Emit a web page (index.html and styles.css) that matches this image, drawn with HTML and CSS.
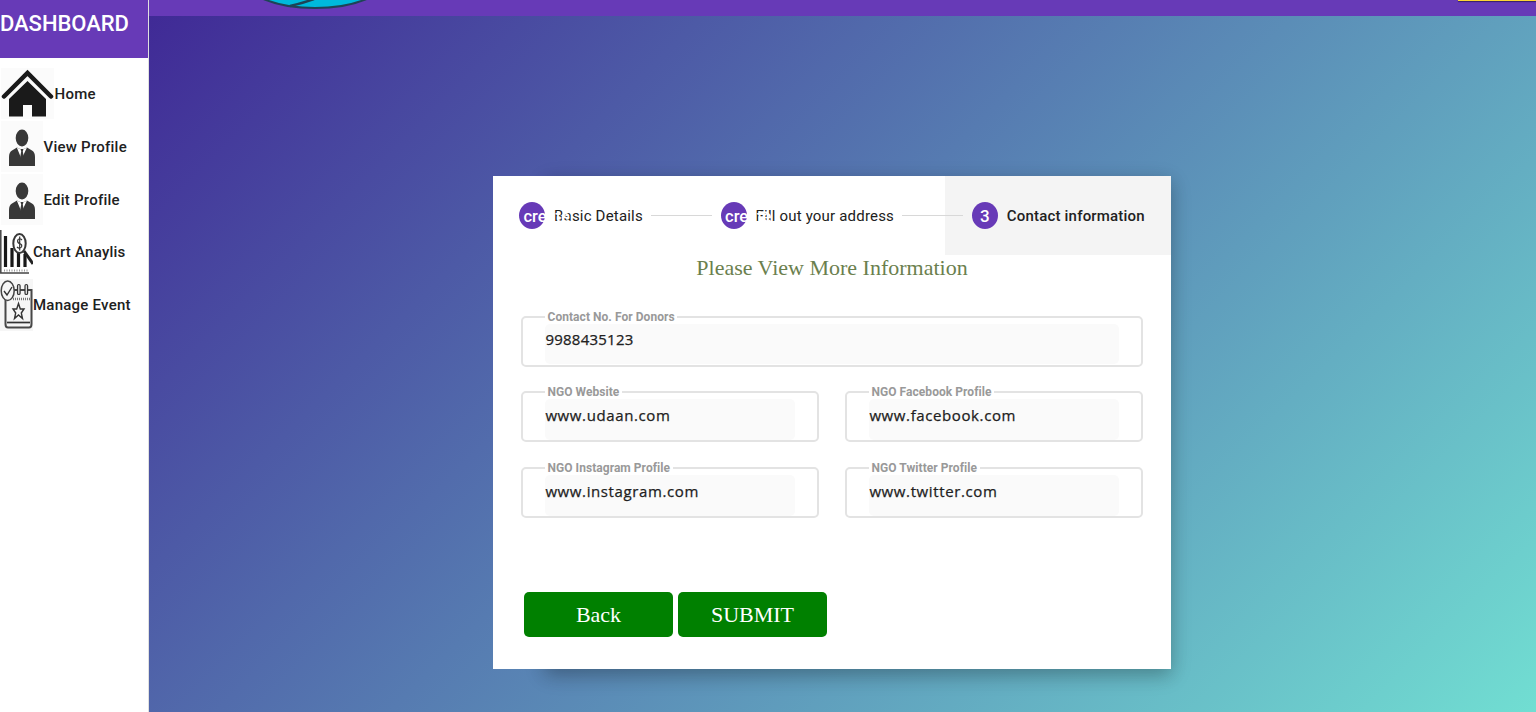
FILE: index.html
```html
<!DOCTYPE html>
<html lang="en">
<head>
<meta charset="utf-8">
<title>Dashboard</title>
<link rel="stylesheet" href="styles.css">
</head>
<body>
<div class="app">
  <aside class="sidebar">
    <div class="brand">DASHBOARD</div>
    <nav class="menu">
      <a class="item home"><svg class="ico" width="54" height="52" viewBox="0 0 54 52"><rect x="1" width="53" height="51" fill="#fbfbfb"/><path d="M4 28.500L27.500 5L51 28.500" fill="none" stroke="#1a1a1a" stroke-width="4.500" stroke-linecap="round"/><path d="M27.500 13L46 31V48.500H32V37H23V48.500H9V31Z" fill="#1a1a1a"/></svg><span>Home</span></a>
      <a class="item"><svg class="ico" width="43" height="52" viewBox="0 0 43 52"><use href="#person"/></svg><span>View Profile</span></a>
      <a class="item"><svg class="ico" width="43" height="52" viewBox="0 0 43 52"><g id="person"><rect x="1" width="42" height="51" fill="#fbfbfb"/><ellipse cx="22" cy="17" rx="6.300" ry="8.500" fill="#383838"/><path d="M9 45V36Q9 31 12 29.500L17 26.500Q22 30 27 26.500L32 29.500Q35 31 35 36V45Z" fill="#383838"/><path d="M16.800 26.500L21.500 38L27 26.500Q22 29.500 16.800 26.500Z" fill="#fff"/><path d="M20.500 28H23.500L22.800 30.500L23.800 36L21.800 40L20.200 36L21.200 30.500Z" fill="#383838"/></g></svg><span>Edit Profile</span></a>
      <a class="item chart"><svg class="ico" width="33" height="52" viewBox="0 0 33 52"><path d="M.8 4V47H29" fill="none" stroke="#444" stroke-width="1.500"/><path d="M4 44.500H29" stroke="#999" stroke-width="2" stroke-dasharray="1 1.500"/><path d="M5.500 10V41M12 22V41M18.500 27V41M25 28V41" stroke="#191919" stroke-width="3.200"/><path d="M24 25L33 38" stroke="#222" stroke-width="3"/><ellipse cx="19.500" cy="17.500" rx="6.200" ry="9.500" fill="#fff" stroke="#383838" stroke-width="2"/><path d="M22 14Q19.500 11.500 17.700 14Q17.200 17 19.700 17.500Q22.500 18.500 21.500 21Q19.500 23.500 17 21M19.700 10.500V24.500" fill="none" stroke="#333" stroke-width="1.200"/></svg><span>Chart Anaylis</span></a>
      <a class="item event"><svg class="ico" width="33" height="52" viewBox="0 0 33 52"><rect width="33" height="52" fill="#f6f6f6"/><path d="M12 11H31.500V45Q31.500 48.500 29 48.500H8Q5.500 48.500 5.500 45V20" fill="none" stroke="#484848" stroke-width="2"/><path d="M13 20H31" stroke="#777" stroke-width="2.500" stroke-dasharray="1 1"/><path d="M7 43.500H30" stroke="#333" stroke-width="1.700"/><rect x="17.500" y="5.500" width="2.600" height="10" rx="1.300" fill="#ddd" stroke="#333" stroke-width="1.200"/><rect x="25" y="5.500" width="2.600" height="10" rx="1.300" fill="#ddd" stroke="#333" stroke-width="1.200"/><ellipse cx="7.700" cy="11.800" rx="6.500" ry="9.700" fill="#f6f6f6" stroke="#444" stroke-width="1.500"/><path d="M4 12L7 16L12 8" fill="none" stroke="#333" stroke-width="1.400"/><path d="M18.500 24.500L20.300 30H24L21.300 34L22.500 39.500L18.500 36L14.500 39.500L15.700 34L13 30H16.700Z" fill="none" stroke="#333" stroke-width="1.400"/></svg><span>Manage Event</span></a>
    </nav>
  </aside>
  <main class="main">
    <header class="topbar">
      <svg class="logo" width="130" height="15" viewBox="0 0 130 15"><ellipse cx="65" cy="-22" rx="72" ry="30" fill="#00b9dc" stroke="#1e4456" stroke-width="2"/><path d="M40 6Q53 3 64-1" fill="none" stroke="#1e4456" stroke-width="2.500"/></svg>
      <span class="action"></span>
    </header>
    <section class="stage">
      <div class="card">
        <div class="steps">
          <div class="step"><span class="badge"><span class="lig">create</span></span><span class="label">Basic Details</span></div>
          <i class="line"></i>
          <div class="step second"><span class="badge"><span class="lig">create</span></span><span class="label">Fill out your address</span></div>
          <i class="line"></i>
          <div class="step active"><span class="badge">3</span><span class="label">Contact information</span></div>
        </div>
        <h2 class="title">Please View More Information</h2>
        <div class="fields">
          <div class="field wide"><label>Contact No. For Donors</label><div class="value digits">9988435123</div></div>
          <div class="field"><label>NGO Website</label><div class="value">www.udaan.com</div></div>
          <div class="field"><label>NGO Facebook Profile</label><div class="value">www.facebook.com</div></div>
          <div class="field"><label>NGO Instagram Profile</label><div class="value">www.instagram.com</div></div>
          <div class="field"><label>NGO Twitter Profile</label><div class="value">www.twitter.com</div></div>
        </div>
        <div class="buttons"><button class="btn">Back</button><button class="btn">SUBMIT</button></div>
      </div>
    </section>
  </main>
</div>
</body>
</html>
```
FILE: styles.css
```css
* { box-sizing: border-box; }
body { margin: 0; font-family: Roboto, sans-serif; color: #212121; overflow: hidden; }
.app { display: flex; height: 712px; }
.sidebar { width: 149px; flex: none; background: #fff; border-right: 1px solid #e0e0e0; }
.brand { height: 58px; background: #673ab7; color: #fff; font-size: 22px; font-weight: 500; line-height: 26px; padding-top: 11px; letter-spacing: -.05px; }
.menu { padding-top: 10px; }
.item { display: flex; align-items: center; gap: .5px; height: 52.700px; font-size: 15px; font-weight: 500; letter-spacing: .24px; white-space: nowrap; }
.chart, .event { gap: 0; }
.ico { flex: none; }
.main { flex: 1; display: flex; flex-direction: column; min-width: 0; }
.topbar { height: 16px; flex: none; background: #673ab7; display: flex; justify-content: space-between; align-items: flex-start; padding-left: 101px; }
.logo { display: block; }
.action { width: 78px; height: 1px; background: #fdd835; box-shadow: 0 1px 1px rgba(0,0,0,.5); }
.stage { flex: 1; isolation: isolate; background: linear-gradient(135deg, #402a96, #71ded2); padding: 160px 0 0 344px; }
.card { width: 678px; height: 493px; position: relative; background: #fff; }
.card::before { content: ""; position: absolute; z-index: -1; inset: 0 0 0 52px; box-shadow: 0 6px 16px rgba(0,0,0,.14), 0 6px 20px rgba(0,0,0,.17); }
.steps { display: flex; height: 79px; align-items: stretch; }
.step { display: flex; align-items: center; gap: 9px; padding: 0 26px; font-size: 15px; letter-spacing: .19px; white-space: nowrap; flex: none; }
.active { background: #f4f4f4; font-weight: 500; letter-spacing: .19px; }
.second, .active { padding-left: 26.400px; }
.active { padding-right: 26.200px; }
.badge { width: 26px; height: 27px; border-radius: 50%; background: #673ab7; color: #fff; font-size: 17px; font-weight: 500; display: flex; align-items: center; justify-content: center; letter-spacing: 0; position: relative; z-index: 1; flex: none; }
.lig { width: 17px; padding-top: 2px; font-weight: 500; font-size: 16.500px; }
.line { flex: 1; height: 1px; background: #d8d8d8; margin: 39px -17.500px 0 -18px; position: relative; z-index: 1; }
.title { margin: 0; height: 61px; font: 400 22px/26px "Liberation Serif", serif; color: #6b7f4e; text-align: center; }
.fields { display: grid; grid-template-columns: 298px 298px; column-gap: 26px; row-gap: 24.500px; padding-left: 28px; }
.wide { grid-column: span 2; }
.wide + .field, .wide + .field + .field { margin-top: -.3px; margin-bottom: .3px; }
.field { position: relative; height: 51px; border: 2px solid #e3e3e3; border-radius: 5px; padding: 6px 22px 1px; }
.field label { position: absolute; left: 22px; top: -8.500px; background: #fff; padding: 0 2.500px; font-size: 12px; line-height: 14px; font-weight: 700; letter-spacing: .05px; color: #999; white-space: nowrap; }
.value { height: 41px; background: #fafafa; border-radius: 5px; padding-left: .4px; font: 15px/32px "Open Sans", sans-serif; letter-spacing: .61px; color: #212121; -webkit-text-stroke: .25px #212121; }
.digits { height: 40px; line-height: 31px; letter-spacing: .24px; }
.buttons { display: flex; gap: 5px; padding: 74px 0 0 31px; }
.btn { width: 149px; height: 45px; border: 0; border-radius: 5px; background: #008000; color: #fff; font: 22px "Liberation Serif", serif; padding: 1px 0 0; }
```
